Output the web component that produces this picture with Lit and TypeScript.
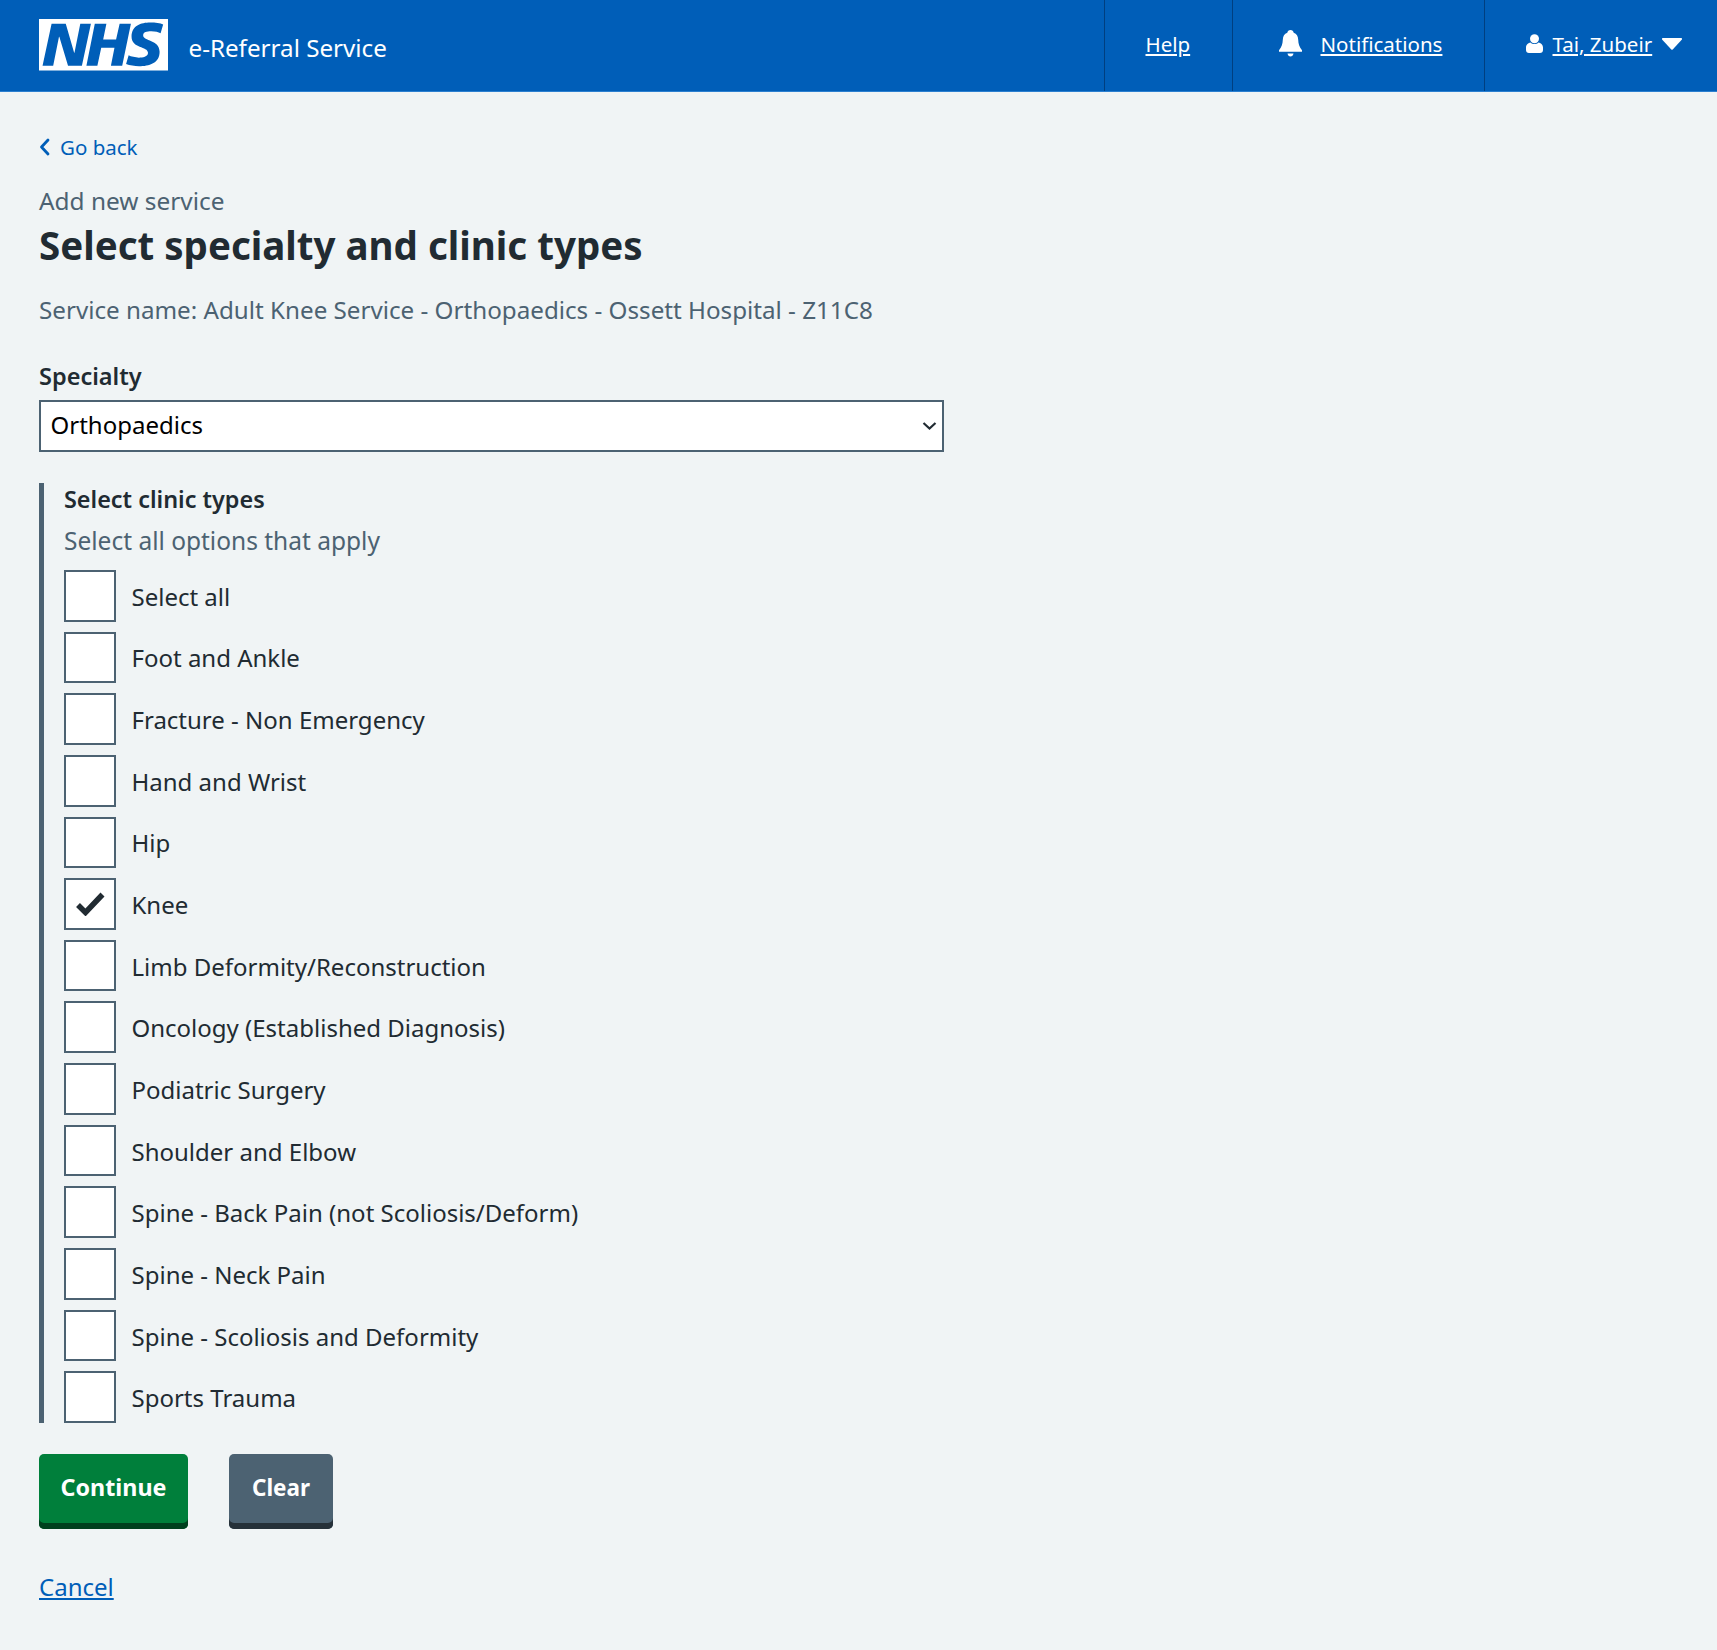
import { LitElement, html, css, svg } from "lit";
import { customElement } from "lit/decorators.js";

const TYPES: { label: string; checked?: boolean }[] = [
  { label: "Select all" },
  { label: "Foot and Ankle" },
  { label: "Fracture - Non Emergency" },
  { label: "Hand and Wrist" },
  { label: "Hip" },
  { label: "Knee", checked: true },
  { label: "Limb Deformity/Reconstruction" },
  { label: "Oncology (Established Diagnosis)" },
  { label: "Podiatric Surgery" },
  { label: "Shoulder and Elbow" },
  { label: "Spine - Back Pain (not Scoliosis/Deform)" },
  { label: "Spine - Neck Pain" },
  { label: "Spine - Scoliosis and Deformity" },
  { label: "Sports Trauma" },
];

const nhsLogo = svg`<svg class="logo" viewBox="0 0 40 16" preserveAspectRatio="none" aria-label="NHS">
  <path fill="#fff" d="M0 0h40v16H0z"/>
  <path fill="#005eb8" d="M3.9 1.5h4.4l2.6 9h.1l1.8-9h3.3l-2.8 13H9l-2.7-9h-.1l-1.8 9H1.1M17.3 1.5h3.6l-1 4.9h4L25 1.5h3.5l-2.7 13h-3.5l1.1-5.6h-4.1l-1.2 5.6h-3.4M37.7 4.4c-.7-.3-1.6-.6-2.9-.6-1.4 0-2.5.2-2.5 1.3 0 1.8 5.1 1.2 5.1 5.1 0 3.6-3.3 4.5-6.4 4.5-1.3 0-2.9-.3-4-.7l.8-2.7c.7.4 2.1.7 3.2.7s2.8-.2 2.8-1.5c0-2.1-5.1-1.3-5.1-5 0-3.4 2.9-4.4 5.8-4.4 1.6 0 3.1.2 4 .6"/>
</svg>`;

@customElement("app-root")
export class AppRoot extends LitElement {
  static styles = css`
    :host {
      display: block;
      min-height: 1650px;
      background: #f0f4f5;
      color: #212b32;
      font-family: "Noto Sans", "Open Sans", sans-serif;
      font-size: 24px;
    }
    * { box-sizing: border-box; }
    a { color: inherit; }
    .header {
      display: flex;
      justify-content: space-between;
      align-items: stretch;
      height: 92px;
      background: #005eb8;
      border-bottom: 1px solid #2b7fd0;
      color: #fff;
    }
    .brand { display: flex; align-items: flex-start; padding: 19px 0 0 39px; }
    .logo { display: block; width: 129px; height: 51.5px; }
    .service {
      margin: 14px 0 0 20.5px;
      font-size: 24.2px;
      line-height: 30px;
    }
    .nav { display: flex; align-items: stretch; }
    .cell {
      display: flex;
      align-items: center;
      border-left: 1px solid #003f80;
      font-size: 20.5px;
      padding-bottom: 4px;
    }
    .cell.help { width: 128px; padding-left: 40.5px; }
    .cell.notes { width: 252px; padding-left: 45.5px; gap: 19px; }
    .cell.user { width: 233px; padding-left: 40.5px; }
    .cell.user .name { margin: 0 10px 0 10px; }
    .bell { width: 23px; height: 27px; display: block; }
    .person { width: 17px; height: 19px; display: block; }
    .caret { width: 20px; height: 12px; display: block; }
    .main { padding: 0 39px; }
    .back {
      display: flex;
      align-items: center;
      gap: 10px;
      margin-top: 40px;
      line-height: 30px;
      font-size: 20.5px;
      color: #005eb8;
      text-decoration: none;
    }
    .back svg { width: 11px; height: 18px; display: block; }
    .caption { margin-top: 24px; line-height: 30px; color: #4c6272; font-size: 24.4px; }
    h1 {
      margin: 7px 0 0;
      font-size: 38.5px;
      line-height: 44px;
      font-weight: 700;
    }
    .svc { margin-top: 27px; line-height: 32px; color: #4c6272; font-size: 24.2px; }
    .lbl { display: block; margin-top: 35px; line-height: 30px; font-weight: 600; font-size: 23.5px; }
    .select-wrap { position: relative; margin-top: 9px; width: 905px; height: 51.5px; }
    select {
      display: block;
      appearance: none;
      width: 100%;
      height: 100%;
      padding: 0 40px 2px 9.5px;
      border: 2px solid #4c6272;
      border-radius: 0;
      background-color: #fff;
      font-family: inherit;
      font-size: 24px;
      color: #000;
    }
    .chev { position: absolute; right: 7px; top: 21px; width: 15px; height: 10px; pointer-events: none; }
    .group {
      margin-top: 31.5px;
      padding: 1px 0 0 20px;
      border-left: 5px solid #4c6272;
    }
    .legend { line-height: 30px; font-weight: 600; font-size: 23.4px; }
    .hint { margin-top: 12px; line-height: 30px; color: #4c6272; font-size: 24.5px; }
    .list {
      display: grid;
      grid-auto-rows: 51.65px;
      row-gap: 10px;
      margin-top: 14px;
    }
    .row { display: flex; align-items: center; gap: 15.5px; }
    .box {
      flex: none;
      display: flex;
      align-items: center;
      justify-content: center;
      width: 52px;
      height: 51.65px;
      background: #fff;
      border: 2px solid #4c6272;
    }
    .box svg { width: 30px; height: 24px; display: block; }
    .text { line-height: 30px; padding-top: 2px; }
    .actions { display: flex; gap: 41px; margin-top: 31px; }
    .btn {
      height: 75px;
      padding-bottom: 9px;
      border: 0;
      border-radius: 5px;
      color: #fff;
      font-family: inherit;
      font-size: 23.3px;
      font-weight: 700;
    }
    .btn.go { width: 149px; background: #007f3b; box-shadow: inset 0 -6px 0 #00401e; }
    .btn.clear { width: 104px; font-size: 22.5px; background: #4c6272; box-shadow: inset 0 -6px 0 #263139; }
    .cancel { display: block; margin-top: 43px; width: max-content; line-height: 30px; color: #005eb8; }
  `;

  render() {
    return html`
      <header class="header">
        <div class="brand">
          ${nhsLogo}
          <div class="service">e-Referral Service</div>
        </div>
        <nav class="nav">
          <div class="cell help"><a href="#">Help</a></div>
          <div class="cell notes">
            <svg class="bell" viewBox="0 0 23 27"><path fill="#fff" d="M11.5 0c1.7 0 3 1.2 3.2 2.8 3 1 4.3 3.6 4.5 7 .2 4.2 1 7 3.8 10.4v1.6H0v-1.6C2.8 16.8 3.6 14 3.8 9.8c.2-3.4 1.5-6 4.5-7C8.5 1.2 9.8 0 11.5 0zM8.5 23.5h6c-.3 2-1.5 3-3 3s-2.7-1-3-3z"/></svg>
            <a href="#">Notifications</a>
          </div>
          <div class="cell user">
            <svg class="person" viewBox="0 0 17 19"><circle cx="8.5" cy="4.8" r="4.5" fill="#fff"/><path fill="#fff" d="M0 13.5C0 10.5 2.5 9 4.5 8.5c1 1 2.5 1.5 4 1.5s3-.5 4-1.5c2 .5 4.5 2 4.5 5V16c0 1.8-1.2 3-3 3H3c-1.8 0-3-1.2-3-3z"/></svg>
            <a class="name" href="#">Tai, Zubeir</a>
            <svg class="caret" viewBox="0 0 20 12"><path fill="#fff" d="M1 0h18c.9 0 1.3 1 .7 1.7l-9 9.8c-.4.4-1 .4-1.4 0L.3 1.700C-.3 1 .1 0 1 0z"/></svg>
          </div>
        </nav>
      </header>
      <main class="main">
        <a class="back" href="#">
          <svg viewBox="0 0 11 18"><path d="M9 2 2.5 9 9 16" fill="none" stroke="#005eb8" stroke-width="2.8" stroke-linecap="round" stroke-linejoin="round"/></svg>
          Go back
        </a>
        <div class="caption">Add new service</div>
        <h1>Select specialty and clinic types</h1>
        <div class="svc">Service name: Adult Knee Service - Orthopaedics - Ossett Hospital - Z11C8</div>
        <label class="lbl" for="specialty">Specialty</label>
        <div class="select-wrap">
          <select id="specialty"><option>Orthopaedics</option></select>
          <svg class="chev" viewBox="0 0 15 10"><path d="M1.5 2 7.5 7.5 13.5 2" fill="none" stroke="#212b32" stroke-width="2.2"/></svg>
        </div>
        <div class="group">
          <div class="legend">Select clinic types</div>
          <div class="hint">Select all options that apply</div>
          <div class="list">
            ${TYPES.map(
              (t) => html`<div class="row">
                <span class="box">
                  ${t.checked
                    ? svg`<svg viewBox="0 0 30 24"><path d="M3 13 10.500 20.500 27.500 2.500" fill="none" stroke="#212b32" stroke-width="5.5"/></svg>`
                    : ""}
                </span>
                <span class="text">${t.label}</span>
              </div>`
            )}
          </div>
        </div>
        <div class="actions">
          <button class="btn go">Continue</button>
          <button class="btn clear">Clear</button>
        </div>
        <a class="cancel" href="#">Cancel</a>
      </main>
    `;
  }
}
